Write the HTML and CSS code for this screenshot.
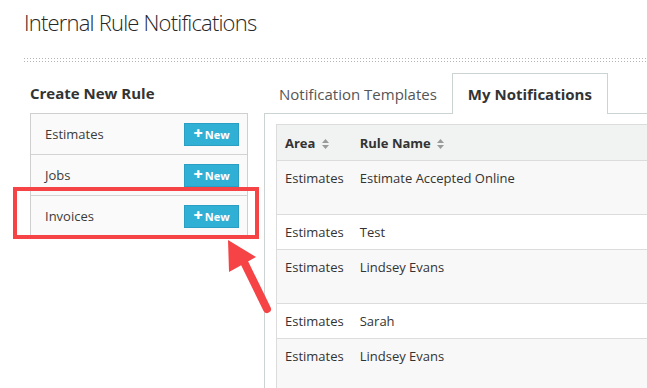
FILE: index.html
```html
<!DOCTYPE html>
<html>
<head>
<meta charset="utf-8">
<link rel="stylesheet" href="styles.css">
</head>
<body>
<div class="page">
  <header class="page-head">
    <h1 class="title">Internal Rule Notifications</h1>
    <div class="dots"></div>
  </header>
  <div class="main">
    <aside class="left">
      <h2 class="left-title">Create New Rule</h2>
      <ul class="rule-list">
        <li class="rule-row"><span>Estimates</span><button class="btn-new"><span class="plus">+</span>New</button></li>
        <li class="rule-row"><span>Jobs</span><button class="btn-new"><span class="plus">+</span>New</button></li>
        <li class="rule-row"><span>Invoices</span><button class="btn-new"><span class="plus">+</span>New</button></li>
      </ul>
    </aside>
    <section class="right">
      <nav class="tabs">
        <div class="tab">Notification Templates</div>
        <div class="tab active">My Notifications</div>
      </nav>
      <div class="panel">
        <table class="grid">
          <thead>
            <tr>
              <th class="c-area">Area <svg class="sort" width="7" height="10" viewBox="0 0 7 10"><path d="M3.5 0 L7 4 H0 Z M0 6 H7 L3.5 10 Z" fill="#9a9a9a"/></svg></th>
              <th>Rule Name <svg class="sort" width="7" height="10" viewBox="0 0 7 10"><path d="M3.5 0 L7 4 H0 Z M0 6 H7 L3.5 10 Z" fill="#9a9a9a"/></svg></th>
            </tr>
          </thead>
          <tbody>
            <tr class="odd tall"><td>Estimates</td><td>Estimate Accepted Online</td></tr>
            <tr class="even"><td>Estimates</td><td>Test</td></tr>
            <tr class="odd tall"><td>Estimates</td><td>Lindsey Evans</td></tr>
            <tr class="even"><td>Estimates</td><td>Sarah</td></tr>
            <tr class="odd tall"><td>Estimates</td><td>Lindsey Evans</td></tr>
          </tbody>
        </table>
      </div>
    </section>
  </div>
  <div class="highlight"></div>
  <svg class="arrow" width="60" height="90" viewBox="220 235 60 90">
    <line x1="244" y1="262" x2="267" y2="309" stroke="#f54346" stroke-width="8" stroke-linecap="round"/>
    <polygon points="228,240 256,257 229,272" fill="#f54346"/>
  </svg>
</div>
</body>
</html>
```
FILE: styles.css
```css
html, body {
  margin: 0;
  padding: 0;
  background: #fff;
  overflow: hidden;
}
body {
  font-family: "Open Sans", "Liberation Sans", sans-serif;
  color: #333;
  width: 647px;
  height: 388px;
}
.page {
  position: relative;
  height: 388px;
  overflow: hidden;
}
.page-head {
  padding: 0 0 0 24px;
}
.title {
  margin: 0;
  padding-top: 6px;
  font-size: 22px;
  font-weight: 300;
  line-height: 32px;
  color: #262626;
  letter-spacing: -0.8px;
}
.dots {
  margin-top: 20px;
  height: 4px;
  background-image:
    linear-gradient(to right, #b5b5b5 1px, transparent 1px),
    linear-gradient(to right, #b5b5b5 1px, transparent 1px);
  background-size: 3px 1px, 3px 1px;
  background-repeat: repeat-x, repeat-x;
  background-position: 0 0, 0 3px;
}
.main {
  display: flex;
  gap: 16px;
  padding-left: 30px;
  margin-top: 11px;
}
.left {
  width: 218px;
  flex: none;
}
.left-title {
  margin: 10px 0 0 0;
  font-size: 15px;
  font-weight: 700;
  line-height: 20px;
  color: #333;
}
.rule-list {
  list-style: none;
  margin: 10px 0 0 0;
  padding: 0;
  border: 1px solid #cfcfcf;
  background: #fafafa;
}
.rule-row {
  display: flex;
  align-items: center;
  justify-content: space-between;
  height: 40px;
  padding: 0 8px 0 14px;
  font-size: 13px;
  color: #3a3a3a;
  border-top: 1px solid #d3d3d3;
}
.rule-row:first-child {
  border-top: none;
}
.btn-new {
  width: 55px;
  height: 23px;
  padding: 0;
  border: 1px solid #2a9ec3;
  background: #31b0d6;
  color: #fff;
  font-family: "Open Sans", "Liberation Sans", sans-serif;
  font-weight: 700;
  font-size: 11px;
  line-height: 21px;
  display: flex;
  align-items: center;
  justify-content: center;
  gap: 2px;
}
.plus {
  font-size: 16px;
  font-weight: 800;
  line-height: 1;
  margin-top: -2px;
}
.right {
  flex: none;
  width: 420px;
}
.tabs {
  display: flex;
  align-items: flex-end;
  border-bottom: 1px solid #ccd3d3;
  height: 40px;
}
.tab {
  padding: 0 15px;
  font-size: 15px;
  line-height: 20px;
  height: 29px;
  color: #555;
}
.tab.active {
  height: 39px;
  line-height: 41px;
  padding: 0 15px;
  border: 1px solid #ccd3d3;
  border-bottom: none;
  background: #fff;
  margin-bottom: -1px;
  font-weight: 700;
  color: #333;
  padding-bottom: 1px;
}
.panel {
  border-left: 1px solid #ccd3d3;
  padding: 10px 0 0 11px;
  height: 300px;
}
.grid {
  border-collapse: collapse;
  width: 400px;
  border-left: 1px solid #dcdcdc;
  border-top: 1px solid #dcdcdc;
  font-size: 13px;
  color: #333;
}
.grid th {
  text-align: left;
  font-weight: 700;
  background: #f1f2f2;
  height: 35px;
  padding: 0 8px;
  border-bottom: 1px solid #dcdcdc;
  white-space: nowrap;
}
.grid th.c-area {
  width: 58px;
}
.sort {
  vertical-align: -1px;
  margin-left: 3px;
}
.grid td {
  padding: 8px 8px 8px 8px;
  line-height: 18px;
  vertical-align: top;
  border-bottom: 1px solid #dcdcdc;
  white-space: nowrap;
}
.grid tr.tall td {
  padding-bottom: 27px;
}
.grid tr.odd {
  background: #f8f8f8;
}
.grid tr.even {
  background: #fff;
}
.highlight {
  position: absolute;
  left: 13px;
  top: 187px;
  width: 238px;
  height: 44px;
  border: 4px solid #f54346;
}
.arrow {
  position: absolute;
  left: 220px;
  top: 235px;
}
```
